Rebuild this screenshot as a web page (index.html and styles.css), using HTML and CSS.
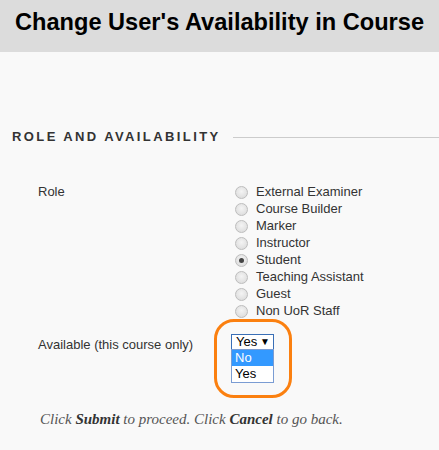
FILE: index.html
```html
<!DOCTYPE html>
<html>
<head>
<meta charset="utf-8">
<link rel="stylesheet" href="styles.css">
</head>
<body>
<header class="page-header">
  <h1 class="page-title">Change User's Availability in Course</h1>
</header>
<main class="content">
  <section class="step">
    <div class="step-head">
      <h2 class="step-title">ROLE AND AVAILABILITY</h2>
      <span class="step-rule"></span>
    </div>
    <div class="field">
      <div class="field-label">Role</div>
      <ul class="radio-list">
        <li class="radio-item"><span class="radio"></span>External Examiner</li>
        <li class="radio-item"><span class="radio"></span>Course Builder</li>
        <li class="radio-item"><span class="radio"></span>Marker</li>
        <li class="radio-item"><span class="radio"></span>Instructor</li>
        <li class="radio-item"><span class="radio checked"></span>Student</li>
        <li class="radio-item"><span class="radio"></span>Teaching Assistant</li>
        <li class="radio-item"><span class="radio"></span>Guest</li>
        <li class="radio-item"><span class="radio"></span>Non UoR Staff</li>
      </ul>
    </div>
    <div class="field field-avail">
      <div class="field-label">Available (this course only)</div>
      <div class="select-wrap">
        <div class="select-box"><span>Yes</span><span class="caret">▼</span></div>
        <ul class="select-list">
          <li class="opt active">No</li>
          <li class="opt">Yes</li>
        </ul>
        <span class="highlight-ring"></span>
      </div>
    </div>
  </section>
  <p class="submit-note">Click <b>Submit</b> to proceed. Click <b>Cancel</b> to go back.</p>
</main>
</body>
</html>
```
FILE: styles.css
```css
* { box-sizing: border-box; }
html, body { margin: 0; padding: 0; }
body {
  background: #f9f9f9;
  font-family: "Liberation Sans", Arial, sans-serif;
  color: #333;
  width: 439px;
  height: 450px;
  overflow: hidden;
}
.page-header {
  background: #dcdcdc;
  height: 52px;
  padding: 8px 0 0 15px;
}
.page-title {
  margin: 0;
  font-size: 23.6px;
  line-height: 28px;
  font-weight: bold;
  color: #000;
  white-space: nowrap;
}
.content { padding: 0; }
.step-head {
  display: flex;
  align-items: center;
  margin-top: 77px;
  padding-left: 12px;
}
.step-title {
  margin: 0;
  font-size: 13px;
  line-height: 16px;
  font-weight: bold;
  letter-spacing: 2.4px;
  color: #333;
}
.step-rule {
  flex: 1;
  height: 1px;
  background: #cccccc;
  margin-left: 12px;
}
.field {
  display: flex;
  padding-left: 38px;
  font-size: 13px;
  line-height: 17px;
  color: #333;
}
.step-head + .field { margin-top: 38px; }
.field-label { width: 197px; }
.radio-list {
  list-style: none;
  margin: 0;
  padding: 0;
}
.radio-item {
  display: flex;
  align-items: center;
  height: 17px;
}
.radio {
  width: 13px;
  height: 13px;
  border-radius: 50%;
  border: 1px solid #bdbdbd;
  background: radial-gradient(circle at 50% 40%, #f4f4f4 0%, #e0e0e0 70%, #d3d3d3 100%);
  margin-right: 8px;
  position: relative;
  top: 1px;
  flex: none;
}
.radio.checked::after {
  content: "";
  position: absolute;
  left: 3px;
  top: 3px;
  width: 5px;
  height: 5px;
  border-radius: 50%;
  background: #444;
}
.field-avail {
  margin-top: 15px;
  height: 50px;
}
.field-avail .field-label { width: 193px; padding-top: 2px; }
.select-wrap {
  position: relative;
  width: 43px;
  height: 15px;
}
.select-box {
  width: 43px;
  height: 16px;
  border: 1px solid #3a6fb6;
  background: #fff;
  display: flex;
  align-items: center;
  justify-content: space-between;
  padding: 0 3px 0 4px;
  font-size: 13px;
  line-height: 14px;
  color: #000;
}
.caret { font-size: 10px; }
.select-list {
  position: absolute;
  left: 0;
  top: 15px;
  width: 43px;
  margin: 0;
  padding: 0;
  list-style: none;
  border: 1px solid #7a9cd3;
  background: #fff;
  font-size: 13px;
  color: #000;
}
.opt {
  height: 16px;
  line-height: 16px;
  padding-left: 3px;
}
.opt.active { background: #3399ff; color: #fff; }
.highlight-ring {
  position: absolute;
  left: -17px;
  top: -15px;
  width: 78px;
  height: 79px;
  border: 3.5px solid #fb8010;
  border-radius: 20px;
}
.submit-note {
  margin: 27px 0 0 40px;
  font-family: "Liberation Serif", Georgia, serif;
  font-style: italic;
  font-size: 15px;
  color: #555;
}
.submit-note b { color: #333; }
```
